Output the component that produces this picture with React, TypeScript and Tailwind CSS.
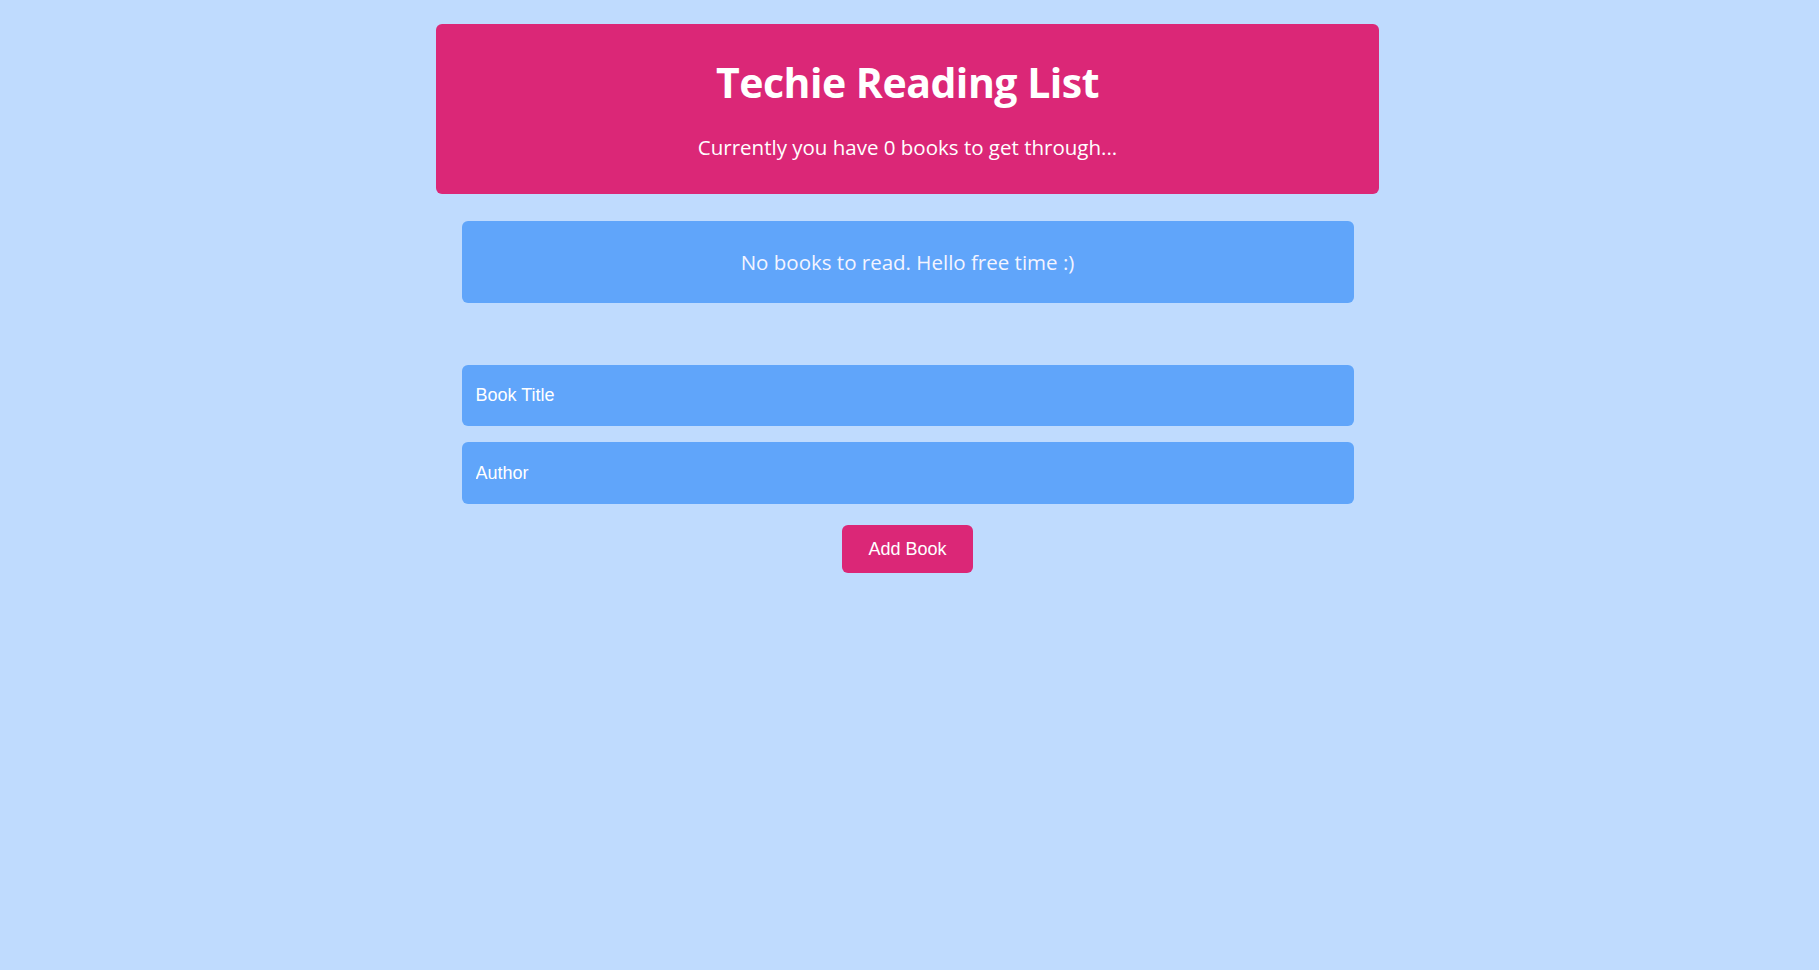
import React from 'react';

export default function App() {
  return (
    <div className="min-h-[970px] bg-[#bfdbfe] pt-6 pr-[4px]">
      <header className="mx-auto w-[943px] rounded-md bg-[#db2777] pt-[28px] pb-[33px] text-center text-white font-['Open_Sans',sans-serif]">
        <h1 className="text-[41px] font-bold leading-[60px] tracking-[-0.5px]">Techie Reading List</h1>
        <p className="mt-[21px] text-[20.5px] leading-[28px]">Currently you have 0 books to get through...</p>
      </header>

      <div className="mx-auto mt-[27px] w-[892px]">
        <div className="flex h-[82px] items-center justify-center rounded-md bg-[#60a5fa] font-['Open_Sans',sans-serif] text-[20.5px] text-[#f3f4ff]">
          No books to read. Hello free time :)
        </div>

        <form className="mt-[62px] flex flex-col gap-4" onSubmit={(e) => e.preventDefault()}>
          <input
            type="text"
            placeholder="Book Title"
            className="h-[61px] w-full rounded-md bg-[#60a5fa] px-[14px] font-['Liberation_Sans',Arial,sans-serif] text-[18px] text-white outline-none placeholder:text-white"
          />
          <input
            type="text"
            placeholder="Author"
            className="h-[62px] w-full rounded-md bg-[#60a5fa] px-[14px] font-['Liberation_Sans',Arial,sans-serif] text-[18px] text-white outline-none placeholder:text-white"
          />
          <div className="mt-[5px] flex justify-center">
            <button
              type="submit"
              className="h-[48px] w-[131px] rounded-md bg-[#db2777] font-['Liberation_Sans',Arial,sans-serif] text-[18px] text-white"
            >
              Add Book
            </button>
          </div>
        </form>
      </div>
    </div>
  );
}
